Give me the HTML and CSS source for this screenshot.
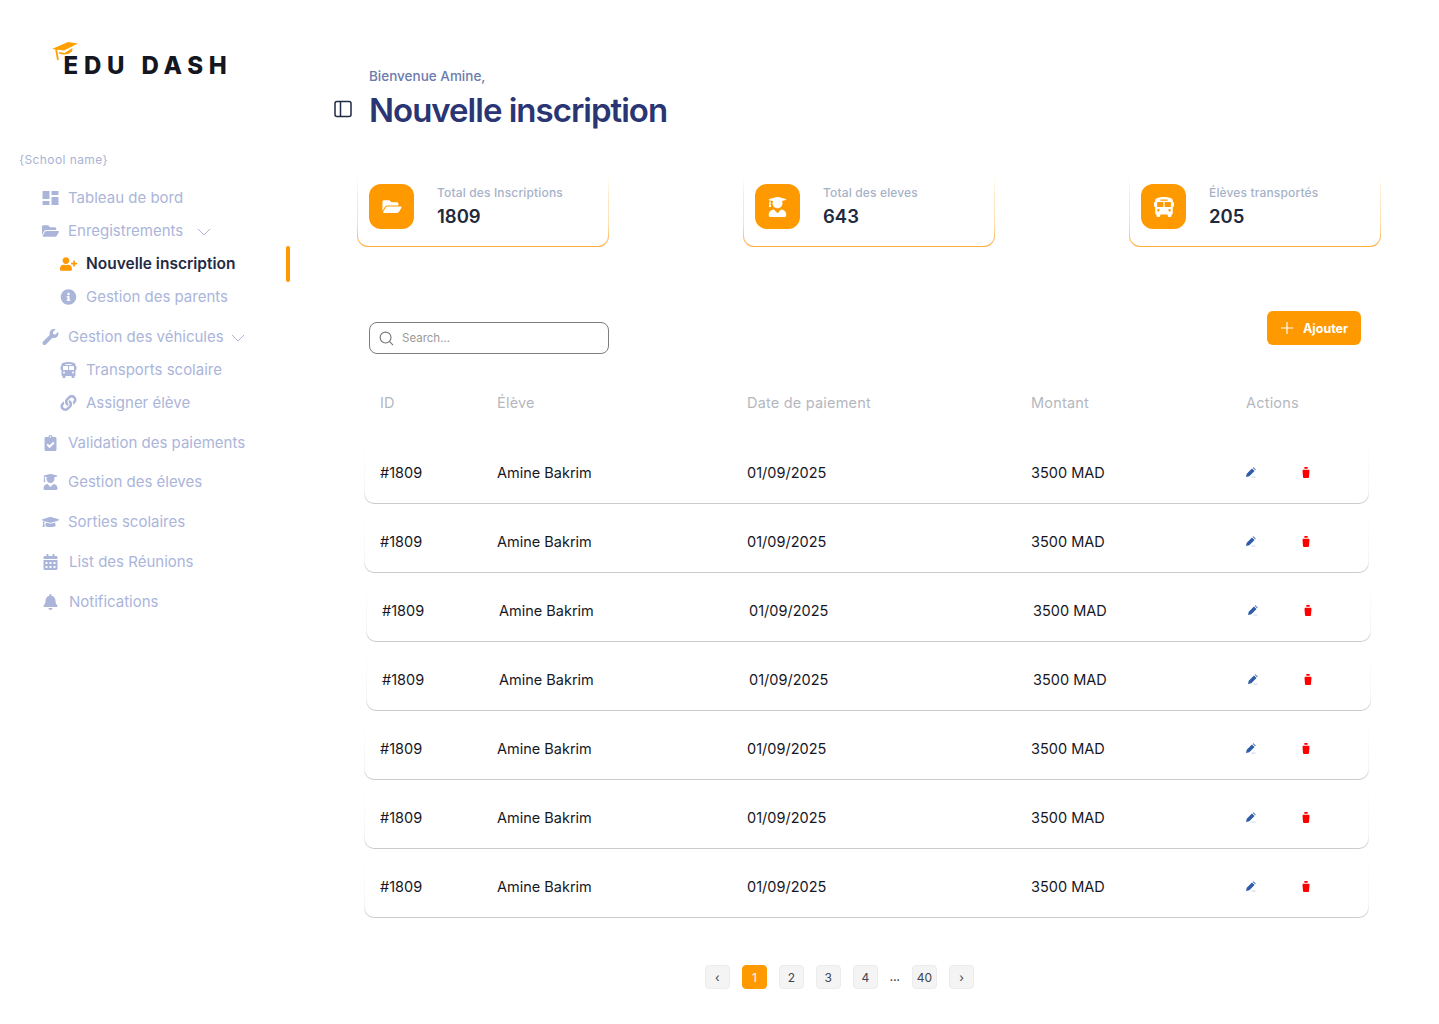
FILE: index.html
```html
<!DOCTYPE html>
<html lang="fr">
<head>
    <meta charset="UTF-8">
    <title>Edu Dash - Nouvelle inscription</title>
    <link rel="stylesheet" href="styles.css">
</head>
<body>
    <!-- icon sprite -->
    <svg class="sprite" aria-hidden="true">
        <symbol id="i-dash" viewBox="0 0 16 16"><path d="M0 1h7v8H0zM9 1h7v4H9zM9 7h7v8H9zM0 11h7v4H0z"/></symbol>
        <symbol id="i-folder" viewBox="0 0 576 512"><path d="M572.694 292.093L500.27 416.248A63.997 63.997 0 0 1 444.989 448H45.025c-18.523 0-30.064-20.093-20.731-36.093l72.424-124.155A64 64 0 0 1 152 256h399.964c18.523 0 30.064 20.093 20.73 36.093zM152 224h328v-48c0-26.51-21.49-48-48-48H272l-64-64H48C21.49 64 0 85.49 0 112v278.046l69.077-118.418C86.214 242.25 117.989 224 152 224z"/></symbol>
        <symbol id="i-user-plus" viewBox="0 0 640 512"><path d="M624 208h-64v-64c0-8.8-7.2-16-16-16h-32c-8.8 0-16 7.2-16 16v64h-64c-8.8 0-16 7.2-16 16v32c0 8.8 7.2 16 16 16h64v64c0 8.8 7.2 16 16 16h32c8.8 0 16-7.2 16-16v-64h64c8.8 0 16-7.2 16-16v-32c0-8.8-7.2-16-16-16zm-400 48c70.7 0 128-57.3 128-128S294.7 0 224 0 96 57.3 96 128s57.3 128 128 128zm89.6 32h-16.7c-22.2 10.2-46.9 16-72.9 16s-50.6-5.8-72.9-16h-16.7C60.2 288 0 348.2 0 422.4V464c0 26.5 21.5 48 48 48h352c26.5 0 48-21.5 48-48v-41.6c0-74.2-60.2-134.4-134.4-134.4z"/></symbol>
        <symbol id="i-info" viewBox="0 0 512 512"><path d="M256 8C119.043 8 8 119.083 8 256c0 136.997 111.043 248 248 248s248-111.003 248-248C504 119.083 392.957 8 256 8zm0 110c23.196 0 42 18.804 42 42s-18.804 42-42 42-42-18.804-42-42 18.804-42 42-42zm56 254c0 6.627-5.373 12-12 12h-88c-6.627 0-12-5.373-12-12v-24c0-6.627 5.373-12 12-12h12v-64h-12c-6.627 0-12-5.373-12-12v-24c0-6.627 5.373-12 12-12h64c6.627 0 12 5.373 12 12v100h12c6.627 0 12 5.373 12 12v24z"/></symbol>
        <symbol id="i-wrench" viewBox="0 0 512 512"><path d="M507.73 109.1c-2.24-9.03-13.54-12.09-20.12-5.51l-74.36 74.36-67.88-11.31-11.31-67.88 74.36-74.36c6.62-6.62 3.43-17.9-5.66-20.16-47.38-11.74-99.55.91-136.58 37.93-39.64 39.64-50.55 97.1-34.05 147.2L18.74 402.76c-24.99 24.99-24.99 65.51 0 90.5 24.99 24.99 65.51 24.99 90.5 0l213.21-213.21c50.12 16.71 107.47 5.68 147.37-34.22 37.07-37.07 49.7-89.32 37.91-136.73z"/></symbol>
        <symbol id="i-bus" viewBox="0 0 512 512"><path fill-rule="evenodd" d="M256 0C131 0 32 35 32 80v48h-8c-13 0-24 11-24 24v80c0 13 11 24 24 24h8v160c0 18 14 32 32 32v32c0 18 14 32 32 32h32c18 0 32-14 32-32v-32h192v32c0 18 14 32 32 32h32c18 0 32-14 32-32v-32c18 0 32-14 32-32V256h8c13 0 24-11 24-24v-80c0-13-11-24-24-24h-8V80C480 35 381 0 256 0zM168 64h176c4 0 8 4 8 8v16c0 4-4 8-8 8H168c-4 0-8-4-8-8V72c0-4 4-8 8-8zM96 128h144v128H96c-9 0-16-7-16-16v-96c0-9 7-16 16-16zM272 128h144c9 0 16 7 16 16v96c0 9-7 16-16 16H272zM112 304a32 32 0 1 1 0 64 32 32 0 0 1 0-64zM400 304a32 32 0 1 1 0 64 32 32 0 0 1 0-64z"/></symbol>
        <symbol id="i-link" viewBox="0 0 512 512"><path d="M326.612 185.391c59.747 59.809 58.927 155.698.36 214.59-.11.12-.24.25-.36.37l-67.2 67.2c-59.27 59.27-155.699 59.262-214.96 0-59.27-59.26-59.27-155.7 0-214.96l37.106-37.106c9.84-9.84 26.786-3.3 27.294 10.606.648 17.722 3.826 35.527 9.69 52.721 1.986 5.822.567 12.262-3.783 16.612l-13.087 13.087c-28.026 28.026-28.905 73.66-1.155 101.96 28.024 28.579 74.086 28.749 102.325.51l67.2-67.19c28.191-28.191 28.073-73.757 0-101.83-3.701-3.694-7.429-6.564-10.341-8.569a16.037 16.037 0 0 1-6.947-12.606c-.396-10.567 3.348-21.456 11.698-29.806l21.054-21.055c5.521-5.521 14.182-6.199 20.584-1.731a152.482 152.482 0 0 1 20.522 17.197zM467.547 44.449c-59.261-59.262-155.69-59.27-214.96 0l-67.2 67.2c-.12.12-.25.25-.36.37-58.566 58.892-59.387 154.781.36 214.59a152.454 152.454 0 0 0 20.521 17.196c6.402 4.468 15.064 3.789 20.584-1.731l21.054-21.055c8.35-8.35 12.094-19.239 11.698-29.806a16.037 16.037 0 0 0-6.947-12.606c-2.912-2.005-6.64-4.875-10.341-8.569-28.073-28.073-28.191-73.639 0-101.83l67.2-67.19c28.239-28.239 74.3-28.069 102.325.51 27.75 28.3 26.872 73.934-1.155 101.96l-13.087 13.087c-4.35 4.35-5.769 10.79-3.783 16.612 5.864 17.194 9.042 34.999 9.69 52.721.509 13.906 17.454 20.446 27.294 10.606l37.106-37.106c59.271-59.259 59.271-155.699.001-214.959z"/></symbol>
        <symbol id="i-clipboard" viewBox="0 0 384 512"><path d="M336 64h-80c0-35.3-28.7-64-64-64s-64 28.7-64 64H48C21.5 64 0 85.5 0 112v352c0 26.5 21.5 48 48 48h288c26.5 0 48-21.5 48-48V112c0-26.5-21.5-48-48-48zM192 40c13.3 0 24 10.7 24 24s-10.7 24-24 24-24-10.7-24-24 10.7-24 24-24zm121.2 231.8l-143 141.8c-4.7 4.7-12.3 4.6-17-.1l-82.6-83.3c-4.7-4.7-4.6-12.3.1-17L99.1 285c4.7-4.7 12.3-4.6 17 .1l46 46.4 106-105.2c4.7-4.7 12.3-4.6 17 .1l28.2 28.4c4.7 4.8 4.6 12.3-.1 17z"/></symbol>
        <symbol id="i-student" viewBox="0 0 448 512"><path d="M319.4 320.6L224 416l-95.4-95.4C57.1 323.7 0 382.2 0 454.4v9.6c0 26.5 21.5 48 48 48h352c26.5 0 48-21.5 48-48v-9.6c0-72.2-57.1-130.7-128.6-133.8zM13.6 79.8l6.4 1.5v58.4c-7 4.2-12 11.5-12 20.3 0 8.4 4.6 15.4 11.1 19.7L3.5 242c-1.7 6.9 2.1 14 7.6 14h41.8c5.5 0 9.3-7.1 7.6-14l-15.6-62.3C51.4 175.4 56 168.4 56 160c0-8.8-5-16.1-12-20.3V87.1l66 15.9c-8.6 17.2-14 36.4-14 57 0 70.7 57.3 128 128 128s128-57.3 128-128c0-20.6-5.3-39.8-14-57l96.3-23.2c18.2-4.4 18.2-27.1 0-31.5l-190.4-46c-13-3.1-26.7-3.1-39.7 0L13.6 48.2c-18.1 4.4-18.1 27.2 0 31.6z"/></symbol>
        <symbol id="i-cap" viewBox="0 0 640 512"><path d="M622.34 153.2L343.4 67.5c-15.2-4.67-31.6-4.67-46.79 0L17.66 153.2c-23.54 7.23-23.54 38.36 0 45.59l48.63 14.94c-10.67 13.19-17.23 29.28-17.88 46.9C38.78 266.15 32 276.11 32 288c0 10.78 5.68 19.85 13.86 25.65L20.33 428.53C18.11 438.52 25.71 448 35.94 448h56.11c10.24 0 17.84-9.48 15.62-19.47L82.14 313.65C90.32 307.85 96 298.78 96 288c0-11.57-6.47-21.25-15.66-26.87.76-15.02 8.44-28.3 20.69-36.72L296.6 284.5c9.06 2.78 26.44 6.25 46.79 0l278.95-85.7c23.55-7.24 23.55-38.36 0-45.6zM352.79 315.09c-28.53 8.76-52.84 3.92-65.59 0l-145.02-44.55L128 384c0 35.35 85.96 64 192 64s192-28.65 192-64l-14.18-113.47-145.03 44.56z"/></symbol>
        <symbol id="i-calendar" viewBox="0 0 448 512"><path d="M0 464c0 26.5 21.5 48 48 48h352c26.5 0 48-21.5 48-48V192H0v272zm320-196c0-6.6 5.4-12 12-12h40c6.6 0 12 5.4 12 12v40c0 6.6-5.4 12-12 12h-40c-6.6 0-12-5.4-12-12v-40zm0 128c0-6.6 5.4-12 12-12h40c6.6 0 12 5.4 12 12v40c0 6.6-5.4 12-12 12h-40c-6.6 0-12-5.4-12-12v-40zM192 268c0-6.6 5.4-12 12-12h40c6.6 0 12 5.4 12 12v40c0 6.6-5.4 12-12 12h-40c-6.6 0-12-5.4-12-12v-40zm0 128c0-6.6 5.4-12 12-12h40c6.6 0 12 5.4 12 12v40c0 6.6-5.4 12-12 12h-40c-6.6 0-12-5.4-12-12v-40zM64 268c0-6.6 5.4-12 12-12h40c6.6 0 12 5.4 12 12v40c0 6.6-5.4 12-12 12H76c-6.6 0-12-5.4-12-12v-40zm0 128c0-6.6 5.4-12 12-12h40c6.6 0 12 5.4 12 12v40c0 6.6-5.4 12-12 12H76c-6.6 0-12-5.4-12-12v-40zM400 64h-48V16c0-8.8-7.2-16-16-16h-32c-8.8 0-16 7.2-16 16v48H160V16c0-8.8-7.2-16-16-16h-32c-8.8 0-16 7.2-16 16v48H48C21.5 64 0 85.5 0 112v48h448v-48c0-26.5-21.5-48-48-48z"/></symbol>
        <symbol id="i-bell" viewBox="0 0 448 512"><path d="M224 512c35.32 0 63.97-28.65 63.97-64H160.03c0 35.35 28.65 64 63.97 64zm215.39-149.71c-19.32-20.76-55.47-51.99-55.47-154.29 0-77.7-54.48-139.9-127.94-155.16V32c0-17.67-14.32-32-31.98-32s-31.98 14.33-31.98 32v20.84C118.56 68.1 64.08 130.3 64.08 208c0 102.3-36.15 133.53-55.47 154.29-6 6.45-8.66 14.16-8.61 21.71.11 16.4 12.98 32 32.1 32h383.8c19.12 0 32-15.6 32.1-32 .05-7.55-2.61-15.27-8.61-21.71z"/></symbol>
        <symbol id="i-chevron" viewBox="0 0 14 8"><path d="M1 1l6 6 6-6" fill="none" stroke="currentColor" stroke-width="1"/></symbol>
        <symbol id="i-pen" viewBox="0 0 12 12"><path d="M7.6 1.6l2.800 2.800-5.700 5.700-3.600.9.800-3.600zM8.400.8l.7-.6 2.700 2.700-.7.7z"/><path d="M7 11h4.500" stroke="#b9c6e2" stroke-width=".8"/></symbol>
        <symbol id="i-trash" viewBox="0 0 8 12"><path d="M2.200 0h3.600v2H2.200zM.5 3h7l.3 1.500-.5 6c0 .8-.6 1.500-1.400 1.500H2.100c-.8 0-1.400-.7-1.400-1.500l-.5-6z"/></symbol>
    </svg>

    <div class="app">
        <aside class="sidebar">
            <div class="logo">
                <svg class="logo-cap" viewBox="0 0 26 20"><path d="M0 8L16 1l10 1.500-14 7z" fill="#ffa000"/><path d="M7 11l5.500 1 8-5-.5 3.500c-3 3-9 4-13 2z" fill="#ffa000"/><path d="M4 8l2 11" stroke="#ffa000" stroke-width="1.800" fill="none"/></svg>
                <span class="logo-text">EDU DASH</span>
            </div>
            <p class="school">{School name}</p>
            <nav class="nav">
                <a class="nav-item"><svg class="ico"><use href="#i-dash"/></svg>Tableau de bord</a>
                <a class="nav-item"><svg class="ico"><use href="#i-folder"/></svg>Enregistrements<svg class="chev"><use href="#i-chevron"/></svg></a>
                <a class="nav-item sub active"><svg class="ico"><use href="#i-user-plus"/></svg>Nouvelle inscription<span class="active-bar"></span></a>
                <a class="nav-item sub"><svg class="ico"><use href="#i-info"/></svg>Gestion des parents</a>
                <a class="nav-item group"><svg class="ico"><use href="#i-wrench"/></svg>Gestion des véhicules<svg class="chev tight"><use href="#i-chevron"/></svg></a>
                <a class="nav-item sub"><svg class="ico"><use href="#i-bus"/></svg>Transports scolaire</a>
                <a class="nav-item sub"><svg class="ico"><use href="#i-link"/></svg>Assigner élève</a>
                <a class="nav-item group"><svg class="ico"><use href="#i-clipboard"/></svg>Validation des paiements</a>
                <a class="nav-item group near"><svg class="ico"><use href="#i-student"/></svg>Gestion des éleves</a>
                <a class="nav-item group"><svg class="ico"><use href="#i-cap"/></svg>Sorties scolaires</a>
                <a class="nav-item group wide"><svg class="ico"><use href="#i-calendar"/></svg>List des Réunions</a>
                <a class="nav-item group wide"><svg class="ico"><use href="#i-bell"/></svg>Notifications</a>
            </nav>
        </aside>

        <main class="main">
            <header class="page-head">
                <svg class="toggle" viewBox="0 0 18 18"><rect x="1" y="1.500" width="16" height="15" rx="2"/><path d="M6.500 1.500v15"/></svg>
                <div>
                    <p class="welcome">Bienvenue Amine,</p>
                    <h1 class="title">Nouvelle inscription</h1>
                </div>
            </header>

            <section class="stats">
                <div class="stat">
                    <div class="stat-inner">
                        <span class="stat-icon"><svg class="ico-folder"><use href="#i-folder"/></svg></span>
                        <div><p class="stat-label">Total des Inscriptions</p><p class="stat-value">1809</p></div>
                    </div>
                </div>
                <div class="stat">
                    <div class="stat-inner">
                        <span class="stat-icon"><svg class="ico-student"><use href="#i-student"/></svg></span>
                        <div><p class="stat-label">Total des eleves</p><p class="stat-value">643</p></div>
                    </div>
                </div>
                <div class="stat">
                    <div class="stat-inner">
                        <span class="stat-icon"><svg class="ico-bus"><use href="#i-bus"/></svg></span>
                        <div><p class="stat-label">Élèves transportés</p><p class="stat-value">205</p></div>
                    </div>
                </div>
            </section>

            <section class="toolbar">
                <label class="search">
                    <svg viewBox="0 0 16 16"><circle cx="7" cy="7" r="5.800"/><path d="M11.300 11.300L15 15"/></svg>
                    <span>Search...</span>
                </label>
                <button class="add-btn"><svg viewBox="0 0 12 12"><path d="M6 0v12M0 6h12"/></svg>Ajouter</button>
            </section>

            <div class="table-head">
                <span>ID</span><span>Élève</span><span>Date de paiement</span><span>Montant</span><span>Actions</span>
            </div>

            <div class="rows">
                <div class="row"><div class="row-inner"><span>#1809</span><span>Amine Bakrim</span><span>01/09/2025</span><span>3500 MAD</span><span class="actions"><svg class="pen"><use href="#i-pen"/></svg><svg class="trash"><use href="#i-trash"/></svg></span></div></div>
                <div class="row"><div class="row-inner"><span>#1809</span><span>Amine Bakrim</span><span>01/09/2025</span><span>3500 MAD</span><span class="actions"><svg class="pen"><use href="#i-pen"/></svg><svg class="trash"><use href="#i-trash"/></svg></span></div></div>
                <div class="row shifted"><div class="row-inner"><span>#1809</span><span>Amine Bakrim</span><span>01/09/2025</span><span>3500 MAD</span><span class="actions"><svg class="pen"><use href="#i-pen"/></svg><svg class="trash"><use href="#i-trash"/></svg></span></div></div>
                <div class="row shifted"><div class="row-inner"><span>#1809</span><span>Amine Bakrim</span><span>01/09/2025</span><span>3500 MAD</span><span class="actions"><svg class="pen"><use href="#i-pen"/></svg><svg class="trash"><use href="#i-trash"/></svg></span></div></div>
                <div class="row"><div class="row-inner"><span>#1809</span><span>Amine Bakrim</span><span>01/09/2025</span><span>3500 MAD</span><span class="actions"><svg class="pen"><use href="#i-pen"/></svg><svg class="trash"><use href="#i-trash"/></svg></span></div></div>
                <div class="row"><div class="row-inner"><span>#1809</span><span>Amine Bakrim</span><span>01/09/2025</span><span>3500 MAD</span><span class="actions"><svg class="pen"><use href="#i-pen"/></svg><svg class="trash"><use href="#i-trash"/></svg></span></div></div>
                <div class="row"><div class="row-inner"><span>#1809</span><span>Amine Bakrim</span><span>01/09/2025</span><span>3500 MAD</span><span class="actions"><svg class="pen"><use href="#i-pen"/></svg><svg class="trash"><use href="#i-trash"/></svg></span></div></div>
            </div>

            <div class="pager">
                <button class="page">‹</button>
                <button class="page current">1</button>
                <button class="page">2</button>
                <button class="page">3</button>
                <button class="page">4</button>
                <span class="dots">...</span>
                <button class="page">40</button>
                <button class="page">›</button>
            </div>
        </main>
    </div>
</body>
</html>
```

FILE: styles.css
```css
* {
    box-sizing: border-box;
}
body {
    margin: 0;
    font-family: Inter, "Noto Sans", sans-serif;
    background: #fff;
    color: #1c2434;
}
p, h1 {
    margin: 0;
}
.sprite {
    display: none;
}
.app {
    display: flex;
    height: 1024px;
    overflow: hidden;
}

/* sidebar */
.sidebar {
    width: 334px;
    flex: none;
    padding-top: 41px;
}
.logo {
    display: flex;
    align-items: flex-end;
    height: 36px;
    padding-left: 52px;
}
.logo-cap {
    width: 26px;
    height: 20px;
    margin-right: -14.500px;
    margin-bottom: 16px;
    flex: none;
}
.logo-text {
    font-size: 24px;
    line-height: 22px;
    font-weight: 800;
    letter-spacing: 5.800px;
    color: #14171f;
    white-space: nowrap;
}
.school {
    margin: 75px 0 0 19px;
    font-size: 12px;
    line-height: 15px;
    letter-spacing: .4px;
    color: #a9b3d6;
}
.nav {
    margin-top: 14px;
}
.nav-item {
    display: flex;
    align-items: center;
    width: 290px;
    height: 33px;
    padding-left: 42px;
    font-size: 15px;
    color: #abb5da;
    white-space: nowrap;
}
.nav-item.sub {
    padding-left: 60px;
}
.nav-item.group {
    margin-top: 7px;
}
.nav-item.near {
    margin-top: 6px;
}
.nav-item.wide .ico {
    margin-right: 10px;
}
.nav-item .ico {
    width: 17px;
    height: 16px;
    margin-right: 9px;
    fill: #abb5da;
    flex: none;
}
.nav-item.active {
    font-size: 15.500px;
    font-weight: 600;
    color: #1f2a44;
}
.nav-item.active .ico {
    fill: #ff9900;
}
.active-bar {
    width: 4px;
    height: 36px;
    margin-left: auto;
    border-radius: 2px;
    background: #ff9900;
    flex: none;
}
.chev {
    width: 14px;
    height: 8px;
    margin: 3px 0 0 14px;
    color: #abb5da;
}
.chev.tight {
    margin-left: 7px;
}

/* header */
.main {
    flex: 1;
    min-width: 0;
}
.page-head {
    display: flex;
    align-items: flex-end;
    gap: 17px;
    padding-top: 68px;
    height: 175px;
}
.page-head > div {
    margin-bottom: 45px;
}
.toggle {
    width: 18px;
    height: 18px;
    margin-bottom: 57px;
    fill: none;
    stroke: #1f2a44;
    stroke-width: 1.500;
}
.welcome {
    font-size: 13.500px;
    line-height: 16px;
    font-weight: 500;
    color: #6d7aac;
}
.title {
    margin-top: 6px;
    font-size: 33px;
    line-height: 40px;
    font-weight: 600;
    letter-spacing: -1px;
    color: #2a3574;
}

/* stat cards */
.stats {
    display: flex;
    justify-content: space-between;
    width: 1024px;
    margin-left: 23px;
}
.stat {
    width: 252px;
    height: 72px;
    padding: 0 1px 1px;
    border-radius: 0 0 11px 11px;
    background: linear-gradient(to bottom, #fff 0, #ffeacc 30%, #ffdfb0 70%, #ffab3d 100%);
}
.stat-inner {
    display: flex;
    align-items: flex-start;
    gap: 23px;
    height: 100%;
    padding: 9px 11px;
    border-radius: 0 0 10px 10px;
    background: #fff;
}
.stat-icon {
    display: flex;
    align-items: center;
    justify-content: center;
    width: 45px;
    height: 45px;
    border-radius: 12px;
    background: #ff9900;
    flex: none;
}
.stat-icon svg {
    fill: #fff;
}
.ico-folder {
    width: 20px;
    height: 17px;
}
.ico-student {
    width: 19px;
    height: 20px;
}
.ico-bus {
    width: 20px;
    height: 20px;
}
.stat-label {
    margin-top: 1px;
    font-size: 12px;
    line-height: 15px;
    font-weight: 500;
    letter-spacing: .15px;
    color: #a6b2c8;
}
.stat-value {
    margin-top: 4px;
    font-size: 18.500px;
    line-height: 24px;
    font-weight: 600;
    color: #1f2a3d;
}

/* toolbar */
.toolbar {
    display: flex;
    justify-content: space-between;
    align-items: flex-start;
    width: 992px;
    margin: 64px 0 0 35px;
}
.search {
    display: flex;
    align-items: center;
    gap: 8px;
    width: 240px;
    height: 32px;
    margin-top: 11px;
    padding-left: 9px;
    border: 1px solid #7d7d7d;
    border-radius: 8px;
    font-size: 11.500px;
    color: #9a9a9a;
}
.search svg {
    width: 15px;
    height: 15px;
    fill: none;
    stroke: #777;
    stroke-width: 1.200;
}
.add-btn {
    display: flex;
    align-items: center;
    gap: 10px;
    height: 34px;
    width: 94px;
    padding: 0 0 0 14px;
    border: none;
    border-radius: 6px;
    background: #ff9900;
    color: #fff;
    font-family: inherit;
    font-size: 12.500px;
    font-weight: 700;
}
.add-btn svg {
    width: 12px;
    height: 12px;
    stroke: #fff;
    stroke-width: 1.200;
}

/* table */
.table-head,
.row-inner {
    display: grid;
    grid-template-columns: 117px 250px 284px 215px 1fr;
    align-items: center;
    padding-left: 16px;
}
.table-head {
    width: 1005px;
    height: 20px;
    margin: 38px 0 0 30px;
    font-size: 14.500px;
    letter-spacing: .2px;
    color: #b5b7c0;
}
.rows {
    display: flex;
    flex-direction: column;
    gap: 8px;
    margin: 31px 0 0 30px;
}
.row {
    width: 1005px;
    height: 61px;
    padding: 0 1px 1px;
    border-radius: 0 0 10px 10px;
    background: linear-gradient(to bottom, #fff 0, #f5f5f5 80%, #c9c9c9 100%);
}
.row.shifted {
    margin-left: 2px;
}
.row-inner {
    height: 100%;
    padding-left: 15px;
    padding-bottom: 2px;
    border-radius: 0 0 9px 9px;
    background: #fff;
    font-size: 14.500px;
    color: #17171f;
}
.actions {
    display: flex;
    align-items: center;
    gap: 46px;
    margin-left: -1px;
}
.pen {
    width: 11px;
    height: 11px;
    fill: #2f5ca8;
}
.trash {
    width: 8px;
    height: 11px;
    fill: #ff0000;
}

/* pagination */
.pager {
    display: flex;
    align-items: center;
    justify-content: center;
    gap: 12px;
    width: 1011px;
    margin-top: 47px;
}
.page {
    min-width: 25px;
    height: 24px;
    padding: 0 4px;
    border: 1px solid #ececec;
    border-radius: 4px;
    background: #f4f4f4;
    font-family: inherit;
    font-size: 12px;
    color: #3f4450;
}
.page.current {
    border-color: #ff9900;
    background: #ff9900;
    color: #fff;
}
.dots {
    width: 10px;
    font-size: 10px;
    font-weight: 700;
    color: #3f4450;
}
```
